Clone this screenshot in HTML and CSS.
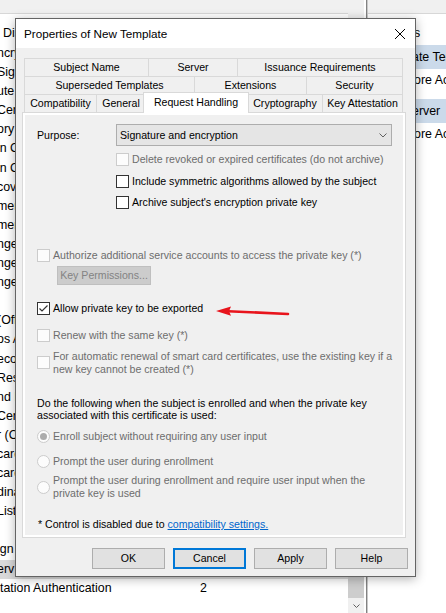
FILE: index.html
```html
<!DOCTYPE html>
<html>
<head>
<meta charset="utf-8">
<link rel="stylesheet" href="styles.css">
</head>
<body>
<div class="app">
  <div class="list">
    <div class="band"></div>
    <div class="list-head">Dis</div>
    <div class="rows">
      <div class="row">ncry</div>
      <div class="row">Sign</div>
      <div class="row">ute</div>
      <div class="row">Cer</div>
      <div class="row">ory</div>
      <div class="row">in C</div>
      <div class="row">in C</div>
      <div class="row">cov</div>
      <div class="row">men</div>
      <div class="row">men</div>
      <div class="row">nge</div>
      <div class="row">nge</div>
      <div class="row">nge</div>
      <div class="row"></div>
      <div class="row">(Off</div>
      <div class="row">os A</div>
      <div class="row">eco</div>
      <div class="row">Res</div>
      <div class="row">nd I</div>
      <div class="row">Cert</div>
      <div class="row">r (O</div>
      <div class="row">card</div>
      <div class="row">card</div>
      <div class="row">dina</div>
      <div class="row">List</div>
      <div class="row"></div>
      <div class="row">ign</div>
      <div class="row sel">erv</div>
      <div class="row last"><span class="name">tation Authentication</span><span class="ver">2</span></div>
    </div>
  </div>
  <div class="vscroll">
    <div class="band"></div>
    <div class="track"></div>
    <div class="thumb"></div>
    <div class="sarrow"><svg width="7" height="4" viewBox="0 0 7 4"><polyline points="0.5,0.5 3.5,3.5 6.5,0.5" fill="none" stroke="#606060" stroke-width="1"/></svg></div>
  </div>
  <div class="divider"></div>
  <div class="actions">
    <div class="band"></div>
    <div class="act-head">s</div>
    <div class="grp">ate Templates</div>
    <div class="item">ore Actions</div>
    <div class="grp grp2">erver</div>
    <div class="item">ore Actions</div>
  </div>
</div>

<div class="dialog">
  <div class="titlebar">
    <span class="title">Properties of New Template</span>
    <svg class="close" width="10" height="10" viewBox="0 0 10 10"><path d="M0 0L10 10M10 0L0 10" stroke="#000" stroke-width="1"/></svg>
  </div>
  <div class="body">
    <div class="tabs">
      <div class="tabrow r1">
        <div class="tab">Subject Name</div>
        <div class="tab">Server</div>
        <div class="tab">Issuance Requirements</div>
      </div>
      <div class="tabrow r2">
        <div class="tab">Superseded Templates</div>
        <div class="tab">Extensions</div>
        <div class="tab">Security</div>
      </div>
      <div class="tabrow r3">
        <div class="tab">Compatibility</div>
        <div class="tab">General</div>
        <div class="tab active">Request Handling</div>
        <div class="tab">Cryptography</div>
        <div class="tab">Key Attestation</div>
      </div>
    </div>
    <div class="panel">
      <div class="page">
        <div class="purpose-row">
          <span class="plabel">Purpose:</span>
          <div class="select"><span>Signature and encryption</span><svg class="chev" width="8" height="5" viewBox="0 0 8 5"><polyline points="0.5,0.5 4,4 7.5,0.5" fill="none" stroke="#606060" stroke-width="1"/></svg></div>
        </div>
        <div class="cb-row indent m7 dis"><span class="box"></span><span>Delete revoked or expired certificates (do not archive)</span></div>
        <div class="cb-row indent m9"><span class="box"></span><span>Include symmetric algorithms allowed by the subject</span></div>
        <div class="cb-row indent m8"><span class="box"></span><span>Archive subject's encryption private key</span></div>

        <div class="cb-row m40 dis"><span class="box"></span><span>Authorize additional service accounts to access the private key (*)</span></div>
        <div class="btn-dis">Key Permissions...</div>

        <div class="cb-row m17"><span class="box"><svg width="11" height="11" viewBox="0 0 11 11"><polyline points="1.5,5.5 4,8 9.5,2.5" fill="none" stroke="#333" stroke-width="1.2"/></svg></span><span>Allow private key to be exported</span></div>
        <div class="cb-row m14 dis"><span class="box"></span><span>Renew with the same key (*)</span></div>
        <div class="cb-row m8 dis two"><span class="box"></span><span>For automatic renewal of smart card certificates, use the existing key if a<br>new key cannot be created (*)</span></div>

        <div class="para">Do the following when the subject is enrolled and when the private key<br>associated with this certificate is used:</div>

        <div class="cb-row m9 dis"><span class="radio on"></span><span>Enroll subject without requiring any user input</span></div>
        <div class="cb-row m12 dis"><span class="radio"></span><span>Prompt the user during enrollment</span></div>
        <div class="cb-row m6 dis two13"><span class="radio"></span><span>Prompt the user during enrollment and require user input when the<br>private key is used</span></div>

        <div class="note">* Control is disabled due to <span class="link">compatibility settings.</span></div>

        <svg class="arrow" width="76" height="16" viewBox="0 0 76 16">
          <line x1="14" y1="9.2" x2="74" y2="12" stroke="#e8141c" stroke-width="2.6" stroke-linecap="round"/>
          <polygon points="2,9 17,4.5 15,9.3 17,13.8" fill="#e8141c"/>
        </svg>
      </div>
    </div>
    <div class="buttons">
      <div class="btn">OK</div>
      <div class="btn focus">Cancel</div>
      <div class="btn">Apply</div>
      <div class="btn">Help</div>
    </div>
  </div>
</div>
</body>
</html>
```

FILE: styles.css
```css
html, body {
  margin: 0;
  padding: 0;
  width: 446px;
  height: 613px;
  overflow: hidden;
  background: #fff;
}

.app {
  display: flex;
  height: 613px;
  font-family: "Liberation Sans", Arial, sans-serif;
  font-size: 12.4px;
  color: #000;
}

.band {
  height: 13px;
  background: #f0f0f0;
  border-bottom: 1px solid #d7d7d7;
}

.list {
  width: 348px;
  overflow: hidden;
  flex: none;
}

.list-head {
  height: 30px;
  box-sizing: border-box;
  padding: 8px 0 0 3px;
  line-height: 22px;
  white-space: nowrap;
}

.row {
  height: 19.1px;
  line-height: 19.1px;
  white-space: nowrap;
  overflow: hidden;
  text-indent: -3px;
}

.row.last {
  text-indent: 0;
}

.row.sel {
  background: #d9d9d9;
}

.name {
  display: inline-block;
  width: 200px;
}

.vscroll {
  width: 16px;
  flex: none;
  display: flex;
  flex-direction: column;
  background: #f0f0f0;
}

.vscroll .band {
  border-bottom: none;
}

.track {
  flex: 1;
}

.thumb {
  height: 40px;
  background: #cdcdcd;
}

.sarrow {
  height: 15px;
  display: flex;
  align-items: center;
  justify-content: center;
}

.divider {
  width: 2px;
  margin-left: 2px;
  flex: none;
  border-left: 1px solid #828282;
  box-sizing: border-box;
  background: #c8c8c8;
}

.actions {
  flex: 1;
  overflow: hidden;
  white-space: nowrap;
}

.act-head {
  height: 31px;
  box-sizing: border-box;
  padding: 8px 0 0 46px;
  line-height: 22px;
}

.grp {
  height: 24px;
  line-height: 24px;
  padding-left: 44px;
  background: #cbdaea;
}

.grp2 {
  margin-top: 8px;
}

.item {
  height: 22px;
  line-height: 22px;
  padding-left: 46px;
}

/* Dialog */
.dialog {
  position: absolute;
  left: 15px;
  top: 18px;
  width: 401px;
  height: 559px;
  box-sizing: border-box;
  border: 1px solid #646464;
  background: #f0f0f0;
  box-shadow: 0 2px 10px rgba(0, 0, 0, 0.3);
  font-family: "Liberation Sans", Arial, sans-serif;
  font-size: 10.6px;
  color: #000;
  display: flex;
  flex-direction: column;
}

.titlebar {
  height: 29px;
  background: #fff;
  display: flex;
  align-items: center;
  padding-left: 8px;
  font-size: 11.7px;
  flex: none;
}

.close {
  margin-left: auto;
  margin-right: 10px;
}

.body {
  padding: 10px 9px 0 6px;
  display: flex;
  flex-direction: column;
}

.tabs {
  margin: 0 3px 0 2px;
}

.tabrow {
  display: grid;
  grid-auto-rows: 18px;
}

.r1 { grid-template-columns: 124px 89px 1fr; }
.r2 { grid-template-columns: 170px 112px 1fr; }
.r3 { grid-template-columns: 72px 49px 102px 75px 1fr; }

.tab {
  border-top: 1px solid #d9d9d9;
  border-left: 1px solid #d9d9d9;
  background: #f0f0f0;
  text-align: center;
  line-height: 17px;
  white-space: nowrap;
  overflow: hidden;
}

.tab:last-child {
  border-right: 1px solid #d9d9d9;
}

.tab.active {
  position: relative;
  z-index: 2;
  background: #fff;
  margin: -2px -2px 0 -2px;
  height: 21px;
  border: 1px solid #d9d9d9;
  border-bottom: none;
  line-height: 18px;
  box-sizing: border-box;
}

.panel {
  height: 426px;
  box-sizing: border-box;
  border: 1px solid #d9d9d9;
  background: #fff;
  padding: 2px;
}

.page {
  position: relative;
  height: 100%;
  background: #f0f0f0;
  padding-left: 12px;
  box-sizing: border-box;
  overflow: hidden;
}

.purpose-row {
  display: flex;
  align-items: center;
  padding-top: 9px;
}

.plabel {
  width: 79px;
  flex: none;
}

.select {
  width: 276px;
  height: 22px;
  box-sizing: border-box;
  border: 1px solid #adadad;
  background: #e5e5e5;
  display: flex;
  align-items: center;
  padding-left: 3px;
}

.chev {
  margin-left: auto;
  margin-right: 4px;
}

.cb-row {
  display: flex;
  align-items: center;
  line-height: 13px;
  white-space: nowrap;
}

.cb-row.two { line-height: 12.5px; }
.cb-row.two13 { line-height: 13px; }

.indent { margin-left: 79px; }
.m6 { margin-top: 6px; }
.m7 { margin-top: 7px; }
.m8 { margin-top: 8px; }
.m9 { margin-top: 9px; }
.m12 { margin-top: 12px; }
.m14 { margin-top: 14px; }
.m17 { margin-top: 17px; }
.m40 { margin-top: 40px; }

.box {
  width: 13px;
  height: 13px;
  box-sizing: border-box;
  border: 1px solid #333;
  background: #fff;
  margin-right: 3px;
  flex: none;
  display: flex;
}

.radio {
  width: 13px;
  height: 13px;
  box-sizing: border-box;
  border: 1px solid #333;
  border-radius: 50%;
  background: #fff;
  margin-right: 3px;
  flex: none;
  display: flex;
  align-items: center;
  justify-content: center;
}

.dis {
  color: #6d6d6d;
}

.dis .box,
.dis .radio {
  border-color: #cccccc;
  background: #fcfcfc;
}

.radio.on::after {
  content: "";
  width: 7px;
  height: 7px;
  border-radius: 50%;
  background: #acacac;
}

.btn-dis {
  margin: 4px 0 0 20px;
  width: 94px;
  height: 19px;
  box-sizing: border-box;
  border: 1px solid #bfbfbf;
  background: #cccccc;
  color: #838383;
  line-height: 17px;
  text-align: center;
}

.para {
  margin-top: 22px;
  line-height: 12px;
  white-space: nowrap;
}

.note {
  margin-top: 18px;
  line-height: 13px;
  padding-left: 1px;
  white-space: nowrap;
}

.link {
  color: #0066cc;
  text-decoration: underline;
}

.arrow {
  position: absolute;
  left: 189px;
  top: 187px;
}

.buttons {
  display: flex;
  justify-content: flex-end;
  gap: 8px;
  margin: 10px -2px 0 0;
}

.btn {
  width: 73px;
  height: 21px;
  box-sizing: border-box;
  border: 1px solid #adadad;
  background: #e1e1e1;
  text-align: center;
  line-height: 19px;
}

.btn.focus {
  border: 2px solid #0078d7;
  line-height: 17px;
}
```
